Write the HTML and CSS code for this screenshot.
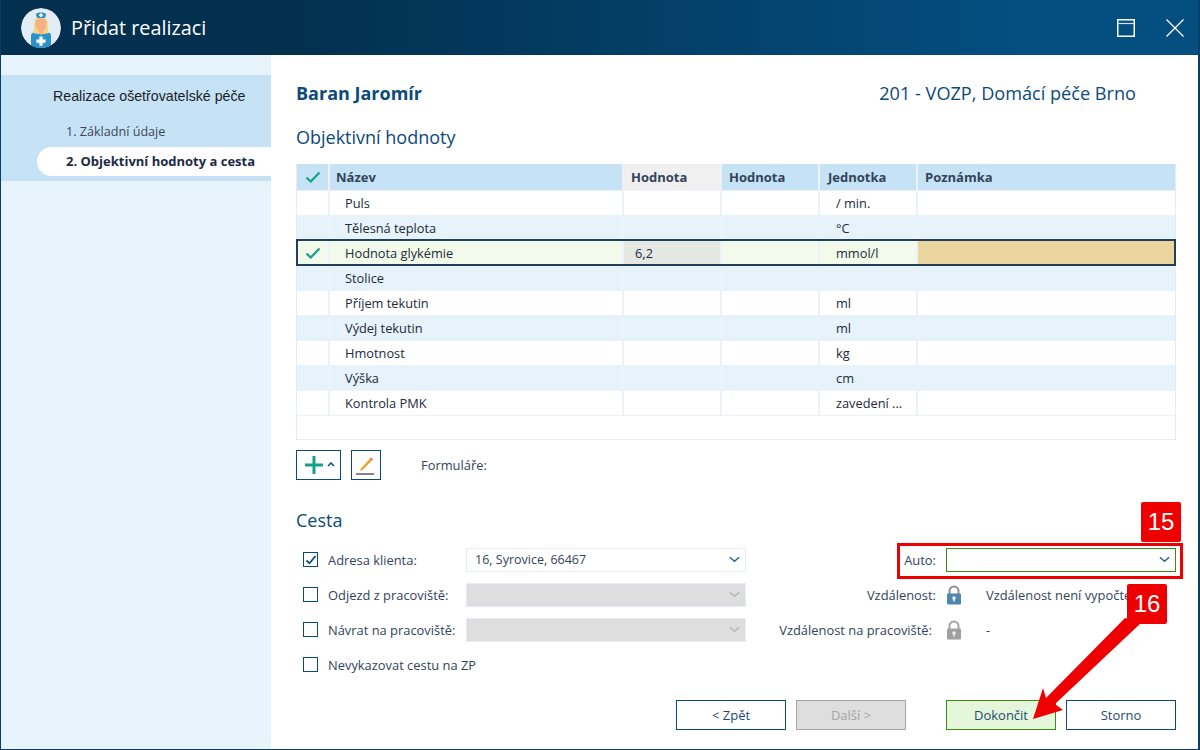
FILE: index.html
```html
<!DOCTYPE html>
<html lang="cs">
<head>
<meta charset="utf-8">
<title>Přidat realizaci</title>
<link rel="stylesheet" href="styles.css">
</head>
<body>
<div class="window">
  <header class="titlebar">
    <div class="avatar">
      <svg viewBox="0 0 40 40" width="40" height="40">
        <circle cx="20" cy="20" r="20" fill="#e3edf5"/>
        <path d="M10 40V27.500c0-2.500 3-3.600 6-4.500h8c3 .9 6 2 6 4.500V40z" fill="#2b93c9"/>
        <path d="M12 25c1.500-4 1-9 1.500-12 .6-2.500 3.500-4 6.500-4s5.900 1.500 6.500 4c.5 3 0 8 1.500 12l-5 1h-6z" fill="#f4d58a"/>
        <path d="M14.500 15c0-2.800 2.500-4.500 5.500-4.500s5.500 1.700 5.500 4.500c0 4-2 7.500-3.500 8.500v2L20 27l-2-1.500v-2c-1.500-1-3.500-4.500-3.500-8.500z" fill="#f6b183"/>
        <path d="M15 6.500C15 5 17.500 4.500 20 4.500s5 .5 5 2c0 1.500-1 3-1.500 3.500h-7C16 9.500 15 8 15 6.500z" fill="#2b93c9"/>
        <path d="M19 5.500h2v1h1v1.600h-1v1h-2v-1h-1V6.500h1z" fill="#fff"/>
        <path d="M18.400 28.500h3.200v3h3v3.200h-3v3h-3.200v-3h-3v-3.200h3z" fill="#fff"/>
      </svg>
    </div>
    <h1 class="app-title">Přidat realizaci</h1>
    <div class="window-controls">
      <svg class="ctl" viewBox="0 0 18 18" width="18" height="18"><rect x=".75" y=".75" width="16.500" height="16.500" fill="none" stroke="#fff" stroke-width="1.500"/><line x1="1" y1="4.500" x2="17" y2="4.500" stroke="#cfe0ec" stroke-width="1.200"/></svg>
      <svg class="ctl" viewBox="0 0 18 18" width="18" height="18"><path d="M.5.500l17 17M17.500.500l-17 17" stroke="#fff" stroke-width="1.300" fill="none"/></svg>
    </div>
  </header>

  <div class="body">
    <aside class="sidebar">
      <nav class="steps">
        <div class="steps-title">Realizace ošetřovatelské péče</div>
        <div class="step">1. Základní údaje</div>
        <div class="step step-active">2. Objektivní hodnoty a cesta</div>
      </nav>
    </aside>

    <main class="content">
      <div class="patient">
        <h2 class="patient-name">Baran Jaromír</h2>
        <div class="patient-ins">201 - VOZP, Domácí péče Brno</div>
      </div>

      <h3 class="section first">Objektivní hodnoty</h3>

      <div class="table-wrap">
        <table class="grid">
          <colgroup>
            <col class="c-check"><col class="c-name"><col class="c-val"><col class="c-val"><col class="c-val"><col>
          </colgroup>
          <thead>
            <tr>
              <th class="chk"><svg class="tick" viewBox="0 0 16 12" width="16" height="12"><path d="M1.500 6.500l4.200 4L14.500 1.500" fill="none" stroke="#16a085" stroke-width="2.200"/></svg></th>
              <th class="th-name">Název</th><th class="sorted">Hodnota</th><th>Hodnota</th><th class="th-unit">Jednotka</th><th>Poznámka</th>
            </tr>
          </thead>
          <tbody>
            <tr><td></td><td class="ind">Puls</td><td></td><td></td><td class="unit">/ min.</td><td></td></tr>
            <tr class="alt"><td></td><td class="ind">Tělesná teplota</td><td></td><td></td><td class="unit">°C</td><td></td></tr>
            <tr class="selected">
              <td class="chk"><svg class="tick" viewBox="0 0 16 12" width="16" height="12"><path d="M1.500 6.500l4.200 4L14.500 1.500" fill="none" stroke="#16a085" stroke-width="2.200"/></svg></td>
              <td class="ind">Hodnota glykémie</td><td class="val-edit">6,2</td><td></td><td class="unit">mmol/l</td><td class="note-edit"></td>
            </tr>
            <tr class="alt"><td></td><td class="ind">Stolice</td><td></td><td></td><td></td><td></td></tr>
            <tr><td></td><td class="ind">Příjem tekutin</td><td></td><td></td><td class="unit">ml</td><td></td></tr>
            <tr class="alt"><td></td><td class="ind">Výdej tekutin</td><td></td><td></td><td class="unit">ml</td><td></td></tr>
            <tr><td></td><td class="ind">Hmotnost</td><td></td><td></td><td class="unit">kg</td><td></td></tr>
            <tr class="alt"><td></td><td class="ind">Výška</td><td></td><td></td><td class="unit">cm</td><td></td></tr>
            <tr><td></td><td class="ind">Kontrola PMK</td><td></td><td></td><td class="unit">zavedení ...</td><td></td></tr>
          </tbody>
        </table>
        <div class="table-space"></div>
      </div>

      <div class="toolbar">
        <button class="tool tool-add" type="button">
          <svg viewBox="0 0 18 18" width="18" height="18"><path d="M9 0v18M0 9h18" stroke="#16a085" stroke-width="3"/></svg>
          <svg viewBox="0 0 8 5" width="8" height="5"><path d="M1 4l3-3 3 3" fill="none" stroke="#0b4a7a" stroke-width="1.500"/></svg>
        </button>
        <button class="tool tool-edit" type="button">
          <svg viewBox="0 0 20 20" width="20" height="20"><path d="M5 13.500L14.500 3l2 2L6.500 15l-2.500 1z" fill="#f0a030"/><path d="M14 3.500l1-1.200 2 2-1 1.200z" fill="#e57373"/><rect x="0" y="18" width="18" height="2" fill="#8a7f94"/></svg>
        </button>
        <span class="forms-label">Formuláře:</span>
      </div>

      <h3 class="section route">Cesta</h3>

      <div class="route-grid">
        <label class="check-row"><span class="box checked"><svg viewBox="0 0 16 16" width="16" height="16"><path d="M3.500 8.500l3 2.800L12.500 4" fill="none" stroke="#0b4a7a" stroke-width="1.800"/></svg></span>Adresa klienta:</label>
        <div class="select"><span>16, Syrovice, 66467</span><svg class="chev" viewBox="0 0 12 7" width="11" height="7"><path d="M1 1l5 4.500L11 1" fill="none" stroke="#2a5f8f" stroke-width="1.500"/></svg></div>
        <div class="lbl lbl-auto">Auto:</div>
        <div class="select select-auto"><span></span><svg class="chev" viewBox="0 0 12 7" width="11" height="7"><path d="M1 1l5 4.500L11 1" fill="none" stroke="#2a5f8f" stroke-width="1.500"/></svg></div>

        <label class="check-row"><span class="box"></span>Odjezd z pracoviště:</label>
        <div class="select select-off"><span></span><svg class="chev" viewBox="0 0 12 7" width="11" height="7"><path d="M1 1l5 4.500L11 1" fill="none" stroke="#b5b5b5" stroke-width="1.500"/></svg></div>
        <div class="lbl">Vzdálenost:</div>
        <div class="info">
          <svg class="lock" viewBox="0 0 16 20" width="16" height="20"><path d="M3.500 9V6a4.500 4.500 0 0 1 9 0v3" fill="none" stroke="#8d8d99" stroke-width="2"/><rect x="1" y="8.500" width="14" height="11" rx="1" fill="#4f86ad"/><circle cx="8" cy="13" r="1.800" fill="#e8f1f7"/><rect x="7.200" y="13.500" width="1.600" height="3" fill="#e8f1f7"/></svg>
          <span class="info-text">Vzdálenost není vypočtena</span>
        </div>

        <label class="check-row"><span class="box"></span>Návrat na pracoviště:</label>
        <div class="select select-off"><span></span><svg class="chev" viewBox="0 0 12 7" width="11" height="7"><path d="M1 1l5 4.500L11 1" fill="none" stroke="#b5b5b5" stroke-width="1.500"/></svg></div>
        <div class="lbl lbl-far">Vzdálenost na pracoviště:</div>
        <div class="info">
          <svg class="lock" viewBox="0 0 16 20" width="16" height="20"><path d="M3.500 9V6a4.500 4.500 0 0 1 9 0v3" fill="none" stroke="#a5a5a5" stroke-width="2"/><rect x="1" y="8.500" width="14" height="11" rx="1" fill="#a0a0a0"/><circle cx="8" cy="13" r="1.800" fill="#ececec"/><rect x="7.200" y="13.500" width="1.600" height="3" fill="#ececec"/></svg>
          <span class="info-text">-</span>
        </div>

        <label class="check-row"><span class="box"></span>Nevykazovat cestu na ZP</label>
      </div>

      <div class="actions">
        <button class="btn" type="button">&lt; Zpět</button>
        <button class="btn btn-off" type="button">Další &gt;</button>
        <button class="btn btn-ok" type="button">Dokončit</button>
        <button class="btn" type="button">Storno</button>
      </div>
    </main>
  </div>

  <div class="mark-frame"></div>
  <div class="badge badge-15">15</div>
  <svg class="arrow" viewBox="0 0 1200 750" width="1200" height="750">
    <path d="M1125 618L1046 698l-3-10-10 31 30-9-8-6 87-82z" fill="#ee0000"/>
  </svg>
  <div class="badge badge-16">16</div>
</div>
</body>
</html>
```
FILE: styles.css
```css
* { box-sizing: border-box; }
html, body { margin: 0; padding: 0; }
body { font-family: "Open Sans", sans-serif; font-size: 13px; color: #33435a; background: #fff; }

.window {
  position: relative;
  width: 1200px;
  height: 750px;
  overflow: hidden;
  display: flex;
  flex-direction: column;
  border-left: 1px solid #04406b;
  border-right: 2px solid #04406b;
  border-bottom: 1px solid #04406b;
}

.titlebar {
  flex: 0 0 55px;
  margin: 0 -2px 0 -1px;
  display: flex;
  align-items: center;
  padding: 0 13px 0 21px;
  background: linear-gradient(90deg, #03304f 0%, #03304f 25%, #044e80 85%, #044e80 100%);
}
.avatar { width: 40px; height: 40px; border-radius: 50%; overflow: hidden; flex: none; }
.avatar svg { display: block; }
.app-title { margin: 0 0 0 10px; font-size: 19.800px; font-weight: 400; color: #fff; line-height: 1; }
.window-controls { margin-left: auto; display: flex; align-items: center; gap: 31px; padding-right: 3px; }
.ctl { display: block; }

.body { flex: 1; display: flex; min-height: 0; }

.sidebar { flex: 0 0 270px; background: #e8f4fb; padding-top: 20px; }
.steps { background: #c5e3f5; height: 106px; padding: 11px 0 0 36px; }
.steps-title { font-family: "Liberation Sans", sans-serif; font-size: 14.200px; color: #1c1c28; line-height: 20px; padding-left: 16px; }
.step { height: 30px; line-height: 30px; padding-left: 29px; font-size: 12.600px; color: #3d4658; }
.steps-title + .step { margin-top: 11px; }
.step-active { height: 29px; line-height: 29px; background: #fff; border-radius: 15px 0 0 15px; font-weight: 700; color: #1c2a44; font-size: 13px; }

.content { flex: 1; padding: 25px 22px 0 25px; display: flex; flex-direction: column; min-width: 0; }

.patient { display: flex; justify-content: space-between; align-items: center; height: 26px; padding-right: 40px; }
.patient-name { margin: 0; font-size: 18px; font-weight: 700; color: #0b4a7a; }
.patient-ins { font-size: 18.140px; color: #0b4a7a; }

.section { margin: 0; font-size: 18px; font-weight: 400; color: #0b4a7a; line-height: 24px; }
.section.first { margin-top: 19px; }
.section.route { margin-top: 28px; }

.table-wrap { margin-top: 15px; width: 880px; border: 1px solid #e6ebf5; border-top: 0; }
.grid { width: 100%; border-collapse: collapse; table-layout: fixed; }
.c-check { width: 32px; }
.c-name { width: 294px; }
.c-val { width: 98px; }
.grid th, .grid td { padding: 0; border-left: 2px solid #edf1fa; overflow: hidden; white-space: nowrap; }
.grid th:first-child, .grid td:first-child { border-left: 0; }
.grid th { height: 26px; background: #c5e3f5; text-align: left; padding-left: 7px; font-weight: 700; color: #33435a; font-size: 13px; border-bottom: 1px solid #edf1fa; }
.grid th.chk { padding-left: 0; }
.grid th.th-name { padding-left: 6px; }
.grid th.th-unit { padding-left: 8px; }
.grid th.sorted { background: #f0f0f0; }
.grid td { height: 25px; padding-top: 1px; font-size: 12.800px; color: #222a38; background: #fff; }
.grid tbody tr { border-bottom: 1px solid #edf1fa; }
.grid tr.alt td { background: #e6f3fb; }
.grid td.ind { padding-left: 15px; }
.grid td.unit { padding-left: 16px; }
.chk { text-align: center; }
.tick { display: block; margin: 0 auto; }
.grid tr.selected { outline: 2px solid #243f5b; outline-offset: -1px; }
.grid tr.selected td { background: #f2faeb; }
.grid tr.selected td.val-edit { background: #e5e7e3; padding-left: 11px; }
.grid tr.selected td.note-edit { background: #e9d59d; }
.table-space { height: 23px; }

.toolbar { margin-top: 10px; display: flex; align-items: center; height: 30px; }
.tool { display: flex; align-items: center; justify-content: center; height: 30px; background: #fff; border: 1px solid #0b4a7a; padding: 0; border-radius: 0; }
.tool-add { width: 45px; gap: 4px; padding-left: 2px; }
.tool-edit { width: 30px; margin-left: 10px; }
.forms-label { margin-left: 40px; font-size: 12.900px; color: #33435a; }

.route-grid {
  margin-top: 16px;
  display: grid;
  grid-template-columns: 170px 280px 200px 230px;
  grid-auto-rows: 24px;
  row-gap: 11px;
  align-items: center;
  width: 880px;
}
.check-row { display: flex; align-items: center; padding-left: 7px; gap: 10px; font-size: 12.900px; color: #33435a; white-space: nowrap; }
.box { width: 15px; height: 15px; border: 1px solid #0b4a7a; background: #fff; flex: none; display: flex; align-items: center; justify-content: center; }
.box svg { display: block; flex: none; }
.select { height: 24px; display: flex; align-items: center; justify-content: space-between; padding: 0 5px 0 8px; background: #fff; border: 1px solid #e6ebf5; font-size: 12.500px; color: #33435a; }
.select-off { background: #dedede; }
.select-auto { border-color: #3f8a12; }
.chev { display: block; flex: none; }
.lbl { text-align: right; padding-right: 10px; font-size: 12.900px; color: #33435a; white-space: nowrap; }
.lbl-far { padding-right: 14px; }
.info { display: flex; align-items: center; white-space: nowrap; }
.lock { display: block; flex: none; }
.info-text { margin-left: 24px; font-size: 12.900px; color: #33435a; }

.actions { margin-top: 23px; display: flex; gap: 10px; justify-content: flex-end; width: 880px; }
.btn { width: 110px; height: 30px; background: #fff; border: 1px solid #0b4a7a; border-radius: 0; font: inherit; font-size: 13px; color: #1f4a73; padding: 0; }
.btn-off { background: #dedede; border: 1px solid #a5a5a5; color: #a5a5a5; }
.btn-ok { margin-left: 30px; background: #e4f7da; border-color: #3f8a12; }

.mark-frame { position: absolute; left: 896px; top: 543px; width: 286px; height: 36px; border: 3px solid #ee0000; }
.badge { position: absolute; width: 40px; height: 40px; background: #ee0000; border-radius: 2px; color: #fff; font-family: "Liberation Sans", sans-serif; font-size: 24px; line-height: 40px; text-align: center; }
.badge-15 { left: 1140px; top: 502px; }
.badge-16 { left: 1126px; top: 584px; }
.arrow { position: absolute; left: -1px; top: 0; pointer-events: none; }
```
